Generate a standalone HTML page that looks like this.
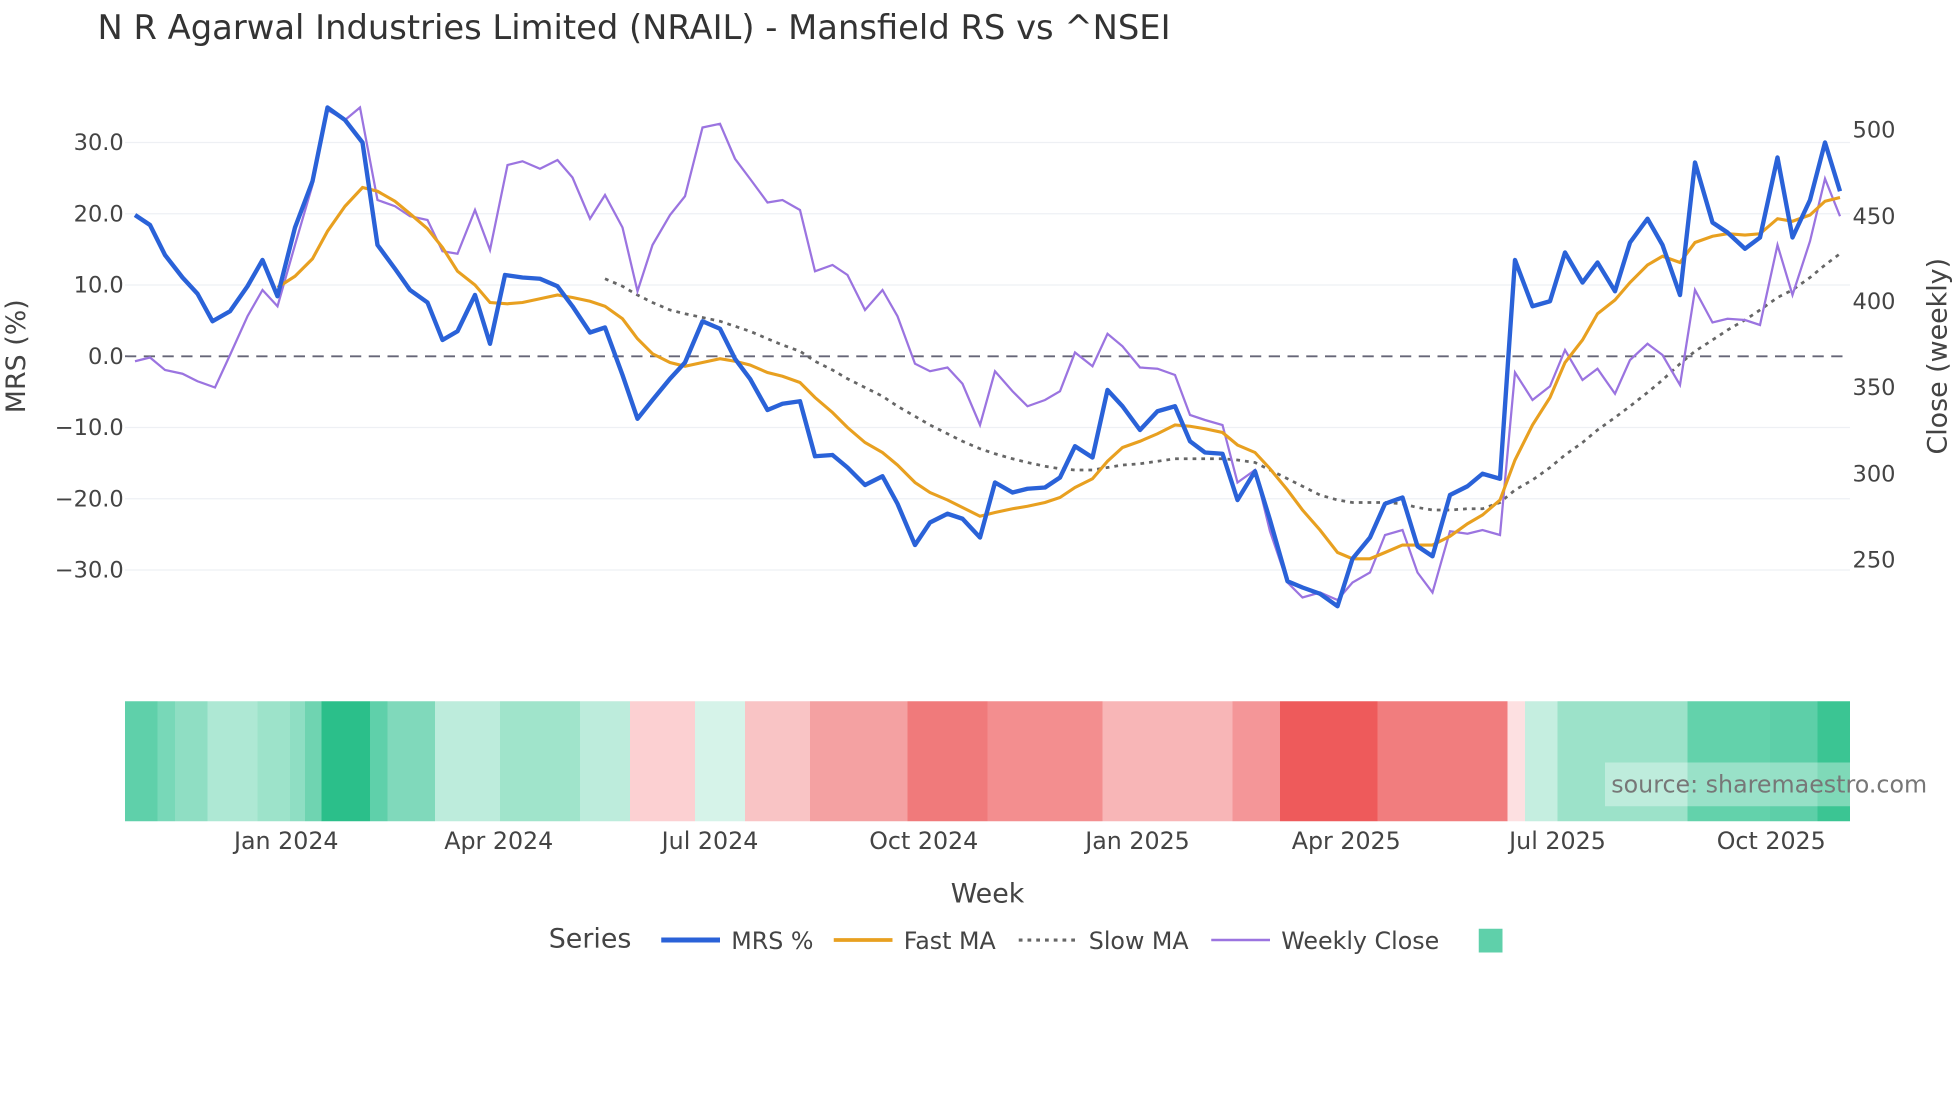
<!DOCTYPE html>
<html><head><meta charset="utf-8"><style>html,body{margin:0;padding:0;background:#fff}svg{display:block}</style></head><body>
<svg width="1960" height="1102" viewBox="0 0 1568 881.6" xmlns="http://www.w3.org/2000/svg" font-family="'DejaVu Sans','Liberation Sans',sans-serif">
<rect width="1568" height="882" fill="#fff"/>
<text x="78" y="31" font-size="27" fill="#333">N R Agarwal Industries Limited (NRAIL) - Mansfield RS vs ^NSEI</text>
<g stroke="#eef0f4" stroke-width="1">
<line x1="100" x2="1480" y1="114" y2="114"/><line x1="100" x2="1480" y1="171" y2="171"/><line x1="100" x2="1480" y1="228" y2="228"/><line x1="100" x2="1480" y1="342" y2="342"/><line x1="100" x2="1480" y1="399" y2="399"/><line x1="100" x2="1480" y1="456" y2="456"/>
</g>
<g font-size="18" fill="#444" text-anchor="end">
<text x="99" y="120">30.0</text><text x="99" y="177">20.0</text><text x="99" y="234">10.0</text><text x="99" y="291">0.0</text><text x="99" y="348">−10.0</text><text x="99" y="405">−20.0</text><text x="99" y="462">−30.0</text>
</g>
<g font-size="18" fill="#444"><text x="1482" y="110">500</text><text x="1482" y="179">450</text><text x="1482" y="247">400</text><text x="1482" y="316">350</text><text x="1482" y="385">300</text><text x="1482" y="454">250</text></g>
<text transform="translate(20,285) rotate(-90)" font-size="21.5" fill="#444" text-anchor="middle">MRS (%)</text>
<text transform="translate(1557,285) rotate(-90)" font-size="21.5" fill="#444" text-anchor="middle">Close (weekly)</text>
<line x1="100" x2="1480" y1="285" y2="285" stroke="#667" stroke-width="1.5" stroke-dasharray="9,6"/>
<polyline fill="none" stroke="#666" stroke-width="2.2" stroke-dasharray="3,4" points="484,223 498,229 510,236 522,242 536,248 548,251 562,254 576,257 588,261 600,265 614,271 626,276 640,281 652,289 666,296 678,303 692,310 706,317 718,325 732,333 744,340 758,347 770,353 784,359 796,363 810,367 822,370 836,373 848,375 860,376 874,376 886,374 898,372 912,371 926,369 940,367 952,367 964,367 978,367 990,368 1004,370 1016,376 1030,383 1042,389 1056,396 1070,400 1082,402 1096,402 1108,402 1122,403 1134,406 1146,408 1160,408 1174,407 1186,407 1200,402 1212,392 1226,384 1240,374 1252,364 1266,354 1278,344 1292,334 1304,325 1318,314 1330,304 1344,291 1356,281 1370,272 1382,264 1396,256 1408,248 1422,238 1434,232 1448,222 1460,212 1472,203"/>
<polyline fill="none" stroke="#9b74e0" stroke-width="1.8" points="108,289 120,286 132,296 146,299 158,305 172,310 184,284 198,253 210,232 222,245 236,196 250,148 262,88 276,96 288,86 302,160 316,165 328,173 342,176 354,201 366,203 380,168 392,200 406,132 418,129 432,135 446,128 458,142 472,175 484,156 498,182 510,233 522,196 536,172 548,157 562,102 576,99 588,127 600,143 614,162 626,160 640,168 652,217 666,212 678,220 692,248 706,232 718,253 732,291 744,297 758,294 770,307 784,340 796,297 810,313 822,325 836,320 848,313 860,282 874,293 886,267 898,277 912,294 926,295 940,300 952,332 964,336 978,340 990,386 1004,376 1016,425 1030,466 1042,478 1056,474 1070,480 1082,466 1096,458 1108,428 1122,424 1134,458 1146,474 1160,425 1174,427 1186,424 1200,428 1212,298 1226,320 1240,309 1252,280 1266,304 1278,295 1292,315 1304,288 1318,275 1330,284 1344,308 1356,232 1370,258 1382,255 1396,256 1408,260 1422,196 1434,236 1448,193 1460,143 1472,173"/>
<polyline fill="none" stroke="#e8a020" stroke-width="2.5" points="222,230 236,221 250,207 262,185 276,165 290,150 302,153 316,161 328,171 342,183 354,198 366,217 380,228 392,242 406,243 418,242 432,239 446,236 458,238 472,241 484,245 498,255 510,271 522,283 536,290 548,293 562,290 576,287 588,289 600,292 614,298 626,301 640,306 652,318 666,330 678,342 692,354 706,362 718,372 732,386 744,394 758,400 770,406 784,413 796,410 810,407 822,405 836,402 848,398 860,390 874,383 886,369 898,358 912,353 926,347 940,340 952,341 964,343 978,346 990,356 1004,362 1016,375 1030,392 1042,408 1056,424 1070,442 1082,447 1096,447 1108,442 1122,436 1134,436 1146,436 1160,429 1174,419 1186,412 1200,400 1212,368 1226,340 1240,318 1252,290 1266,272 1278,251 1292,240 1304,226 1318,212 1330,205 1344,210 1356,194 1370,189 1382,187 1396,188 1408,187 1422,175 1434,177 1448,172 1460,161 1472,158"/>
<polyline fill="none" stroke="#2a62d8" stroke-width="3.5" stroke-linejoin="round" points="108,172 120,180 132,204 146,222 158,235 170,257 184,249 198,229 210,208 222,237 236,182 250,145 262,86 276,96 290,114 302,196 316,215 328,232 342,242 354,272 366,265 380,236 392,275 404,220 418,222 432,223 446,229 458,245 472,266 484,262 498,300 510,335 522,320 536,303 548,290 562,257 576,263 588,287 600,303 614,328 626,323 640,321 652,365 666,364 678,374 692,388 706,381 718,403 732,436 744,418 758,411 770,415 784,430 796,386 810,394 822,391 836,390 848,382 860,357 874,366 886,312 898,325 912,344 926,329 940,325 952,353 964,362 978,363 990,400 1004,377 1016,416 1030,465 1042,470 1056,475 1070,485 1082,447 1096,430 1108,403 1122,398 1134,437 1146,445 1160,396 1174,389 1186,379 1200,383 1212,208 1226,245 1240,241 1252,202 1266,226 1278,210 1292,233 1304,194 1318,175 1330,196 1344,236 1356,130 1370,178 1382,186 1396,199 1408,190 1422,126 1434,190 1448,160 1460,114 1472,153"/>
<g>
<rect x="100" y="561" width="26" height="96" fill="#5fd0aa"/><rect x="126" y="561" width="14" height="96" fill="#78d8b8"/><rect x="140" y="561" width="26" height="96" fill="#8fdec3"/><rect x="166" y="561" width="40" height="96" fill="#aee8d4"/><rect x="206" y="561" width="26" height="96" fill="#9de3ca"/><rect x="232" y="561" width="12" height="96" fill="#8fdec3"/><rect x="244" y="561" width="13" height="96" fill="#6fd4b1"/><rect x="257" y="561" width="39" height="96" fill="#2bbf8a"/><rect x="296" y="561" width="14" height="96" fill="#5fd0aa"/><rect x="310" y="561" width="38" height="96" fill="#80d9bb"/><rect x="348" y="561" width="52" height="96" fill="#bdecdc"/><rect x="400" y="561" width="64" height="96" fill="#a0e4cb"/><rect x="464" y="561" width="40" height="96" fill="#bdecdc"/><rect x="504" y="561" width="52" height="96" fill="#fcd0d2"/><rect x="556" y="561" width="40" height="96" fill="#d6f3e9"/><rect x="596" y="561" width="52" height="96" fill="#f9c4c5"/><rect x="648" y="561" width="78" height="96" fill="#f4a1a2"/><rect x="726" y="561" width="64" height="96" fill="#f07a7b"/><rect x="790" y="561" width="92" height="96" fill="#f38e8f"/><rect x="882" y="561" width="104" height="96" fill="#f8b6b7"/><rect x="986" y="561" width="38" height="96" fill="#f49698"/><rect x="1024" y="561" width="78" height="96" fill="#ee5a5b"/><rect x="1102" y="561" width="104" height="96" fill="#f17d7e"/><rect x="1206" y="561" width="14" height="96" fill="#fde0e1"/><rect x="1220" y="561" width="26" height="96" fill="#c5eee0"/><rect x="1246" y="561" width="104" height="96" fill="#9ce2c9"/><rect x="1350" y="561" width="66" height="96" fill="#63d2ab"/><rect x="1416" y="561" width="38" height="96" fill="#5dcfa8"/><rect x="1454" y="561" width="26" height="96" fill="#3bc593"/>
</g>
<rect x="1284" y="610" width="196" height="35" fill="#fff" fill-opacity="0.35"/>
<text x="1289" y="634" font-size="19" fill="#777">source: sharemaestro.com</text>
<g font-size="19" fill="#444" text-anchor="middle">
<text x="229" y="679">Jan 2024</text><text x="399" y="679">Apr 2024</text><text x="568" y="679">Jul 2024</text><text x="739" y="679">Oct 2024</text><text x="910" y="679">Jan 2025</text><text x="1077" y="679">Apr 2025</text><text x="1246" y="679">Jul 2025</text><text x="1417" y="679">Oct 2025</text>
</g>
<text x="790" y="722" font-size="21.5" fill="#444" text-anchor="middle">Week</text>
<text x="439" y="758" font-size="21.5" fill="#444">Series</text>
<line x1="529" x2="576" y1="752" y2="752" stroke="#2a62d8" stroke-width="4"/>
<text x="585" y="759" font-size="19" fill="#444">MRS %</text>
<line x1="667" x2="714" y1="752" y2="752" stroke="#e8a020" stroke-width="3"/>
<text x="723" y="759" font-size="19" fill="#444">Fast MA</text>
<line x1="815" x2="860" y1="752" y2="752" stroke="#666" stroke-width="2.5" stroke-dasharray="3,4"/>
<text x="871" y="759" font-size="19" fill="#444">Slow MA</text>
<line x1="969" x2="1016" y1="752" y2="752" stroke="#9b74e0" stroke-width="2"/>
<text x="1025" y="759" font-size="19" fill="#444">Weekly Close</text>
<rect x="1183" y="743" width="19" height="19" fill="#5fd0aa"/>
</svg>
</body></html>
